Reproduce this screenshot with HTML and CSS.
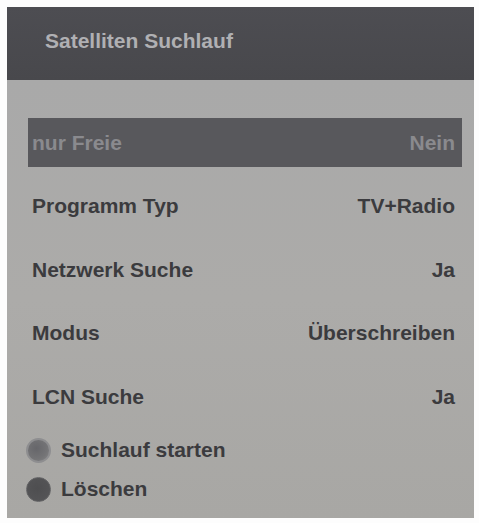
FILE: index.html
```html
<!DOCTYPE html>
<html>
<head>
    <title>Satelliten Suchlauf</title>
    <link rel="stylesheet" href="styles.css">
</head>
<body>
    <div class="screen">
        <div class="header">
            <h1>Satelliten Suchlauf</h1>
        </div>

        <div class="content">
            <ul class="settings">
                <li class="row selected"><span>nur Freie</span><span>Nein</span></li>
                <li class="row"><span>Programm Typ</span><span>TV+Radio</span></li>
                <li class="row"><span>Netzwerk Suche</span><span>Ja</span></li>
                <li class="row"><span>Modus</span><span>Überschreiben</span></li>
                <li class="row"><span>LCN Suche</span><span>Ja</span></li>
            </ul>

            <div class="actions">
                <div class="action"><span class="dot light"></span>Suchlauf starten</div>
                <div class="action"><span class="dot dark"></span>Löschen</div>
            </div>
        </div>
    </div>
</body>
</html>
```

FILE: styles.css
```css
body {
    margin: 0;
    background: #fdfdfd;
    font-family: 'Liberation Sans', Arial, sans-serif;
    color: #3b3b3e;
}

.screen {
    margin: 7px 5px 0 7px;
    width: 467px;
}

.header {
    height: 73px;
    background: linear-gradient(180deg, #4d4d52 0%, #48484c 100%);
    padding-left: 38px;
    box-sizing: border-box;
    display: flex;
    align-items: center;
}

.header h1 {
    margin: 0 0 5px 0;
    font-size: 21px;
    font-weight: bold;
    color: #b0b0b3;
}

.content {
    height: 438px;
    box-sizing: border-box;
    padding: 38px 12px 0 21px;
    background: linear-gradient(180deg, #a9a9a9 0%, #acaba9 50%, #a8a7a4 100%);
}

.settings {
    list-style: none;
    margin: 0;
    padding: 0;
    display: flex;
    flex-direction: column;
    gap: 14.5px;
}

.row {
    height: 49px;
    display: flex;
    align-items: center;
    justify-content: space-between;
    padding: 0 7px 0 4px;
    font-size: 21px;
    font-weight: bold;
}

.row.selected {
    background: #58585c;
    color: #8a8a8e;
}

.actions {
    margin-top: 9.5px;
    display: flex;
    flex-direction: column;
}

.action {
    height: 39px;
    display: flex;
    align-items: center;
    gap: 10px;
    font-size: 21px;
    font-weight: bold;
}

.dot {
    width: 25px;
    height: 25px;
    margin-left: -2px;
    border-radius: 50%;
    box-sizing: border-box;
}

.dot.light {
    border: 2px solid #8e8e90;
    background: radial-gradient(circle at 40% 40%, #66666a 0%, #747476 60%, #88888a 100%);
}

.dot.dark {
    border: 1px solid #626264;
    background: radial-gradient(circle at 45% 45%, #4e4e50 0%, #545456 70%, #5e5e60 100%);
}
```
